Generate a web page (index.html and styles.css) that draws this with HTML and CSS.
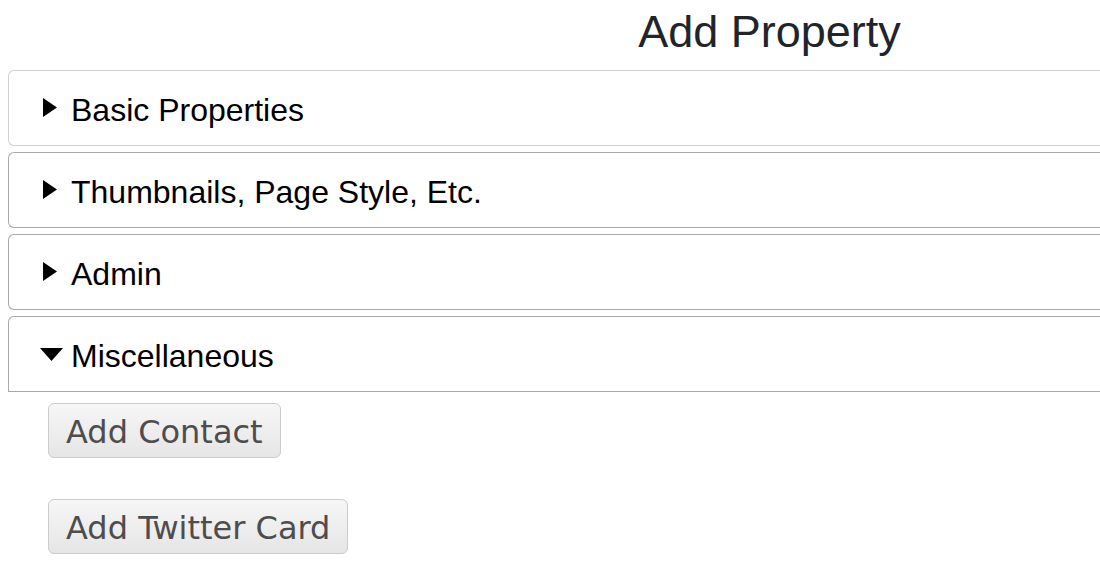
FILE: index.html
```html
<!DOCTYPE html>
<html lang="en">

<head>
    <meta charset="UTF-8">
    <meta name="viewport" content="width=device-width, initial-scale=1.0">
    <title>Add Property</title>
    <link rel="stylesheet" href="styles.css">
</head>

<body>
    <div class="page">
        <h1 class="title">Add Property</h1>

        <details class="section section-first">
            <summary>
                <svg class="marker marker-closed" width="24" height="24" viewBox="0 0 24 24"><polygon points="3,0 17,9.5 3,19" /></svg>
                <svg class="marker marker-open" width="24" height="24" viewBox="0 0 24 24"><polygon points="0,4 23,4 11.5,17" /></svg>
                <span>Basic Properties</span>
            </summary>
        </details>

        <details class="section">
            <summary>
                <svg class="marker marker-closed" width="24" height="24" viewBox="0 0 24 24"><polygon points="3,0 17,9.5 3,19" /></svg>
                <svg class="marker marker-open" width="24" height="24" viewBox="0 0 24 24"><polygon points="0,4 23,4 11.5,17" /></svg>
                <span>Thumbnails, Page Style, Etc.</span>
            </summary>
        </details>

        <details class="section">
            <summary>
                <svg class="marker marker-closed" width="24" height="24" viewBox="0 0 24 24"><polygon points="3,0 17,9.5 3,19" /></svg>
                <svg class="marker marker-open" width="24" height="24" viewBox="0 0 24 24"><polygon points="0,4 23,4 11.5,17" /></svg>
                <span>Admin</span>
            </summary>
        </details>

        <details class="section" open>
            <summary>
                <svg class="marker marker-closed" width="24" height="24" viewBox="0 0 24 24"><polygon points="3,0 17,9.5 3,19" /></svg>
                <svg class="marker marker-open" width="24" height="24" viewBox="0 0 24 24"><polygon points="0,4 23,4 11.5,17" /></svg>
                <span>Miscellaneous</span>
            </summary>
            <div class="section-body">
                <button class="add-btn" type="button">Add Contact</button>
                <button class="add-btn" type="button">Add Twitter Card</button>
            </div>
        </details>
    </div>
</body>
</html>
```

FILE: styles.css
```css
body {
    margin: 0 0 0 8px;
    background: #ffffff;
    font-family: 'Liberation Sans', Arial, sans-serif;
}

.title {
    margin: 0 0 6px;
    padding-left: 431px;
    font-size: 45px;
    font-weight: normal;
    line-height: 64px;
    text-align: center;
    color: #212529;
}

.section {
    margin-bottom: 6px;
}

.section summary {
    display: flex;
    align-items: center;
    padding: 21px 0 17px 31px;
    border: 1px solid #a9a9a9;
    border-right: none;
    border-radius: 6px 0 0 6px;
    font-size: 32px;
    line-height: 36px;
    color: #000000;
    list-style: none;
    cursor: pointer;
}

.section summary::-webkit-details-marker {
    display: none;
}

.section-first summary {
    border-color: #d1d1d1;
}

.section[open] summary {
    border-radius: 6px 0 0 0;
}

.marker {
    flex: none;
    margin-right: 7px;
    fill: #000000;
}

.marker-open {
    display: none;
}

.section[open] .marker-open {
    display: block;
}

.section[open] .marker-closed {
    display: none;
}

.section-body {
    display: flex;
    flex-direction: column;
    align-items: flex-start;
    gap: 41px;
    padding: 11px 0 0 40px;
}

.add-btn {
    height: 55px;
    padding: 4px 17px 0;
    border: 1px solid #cccccc;
    border-radius: 6px;
    background: linear-gradient(#f6f6f6, #eeeeee 50%, #e5e5e5);
    font-family: 'DejaVu Sans', Verdana, sans-serif;
    font-size: 32px;
    line-height: 49px;
    color: #4d4d4d;
    cursor: pointer;
}
```
